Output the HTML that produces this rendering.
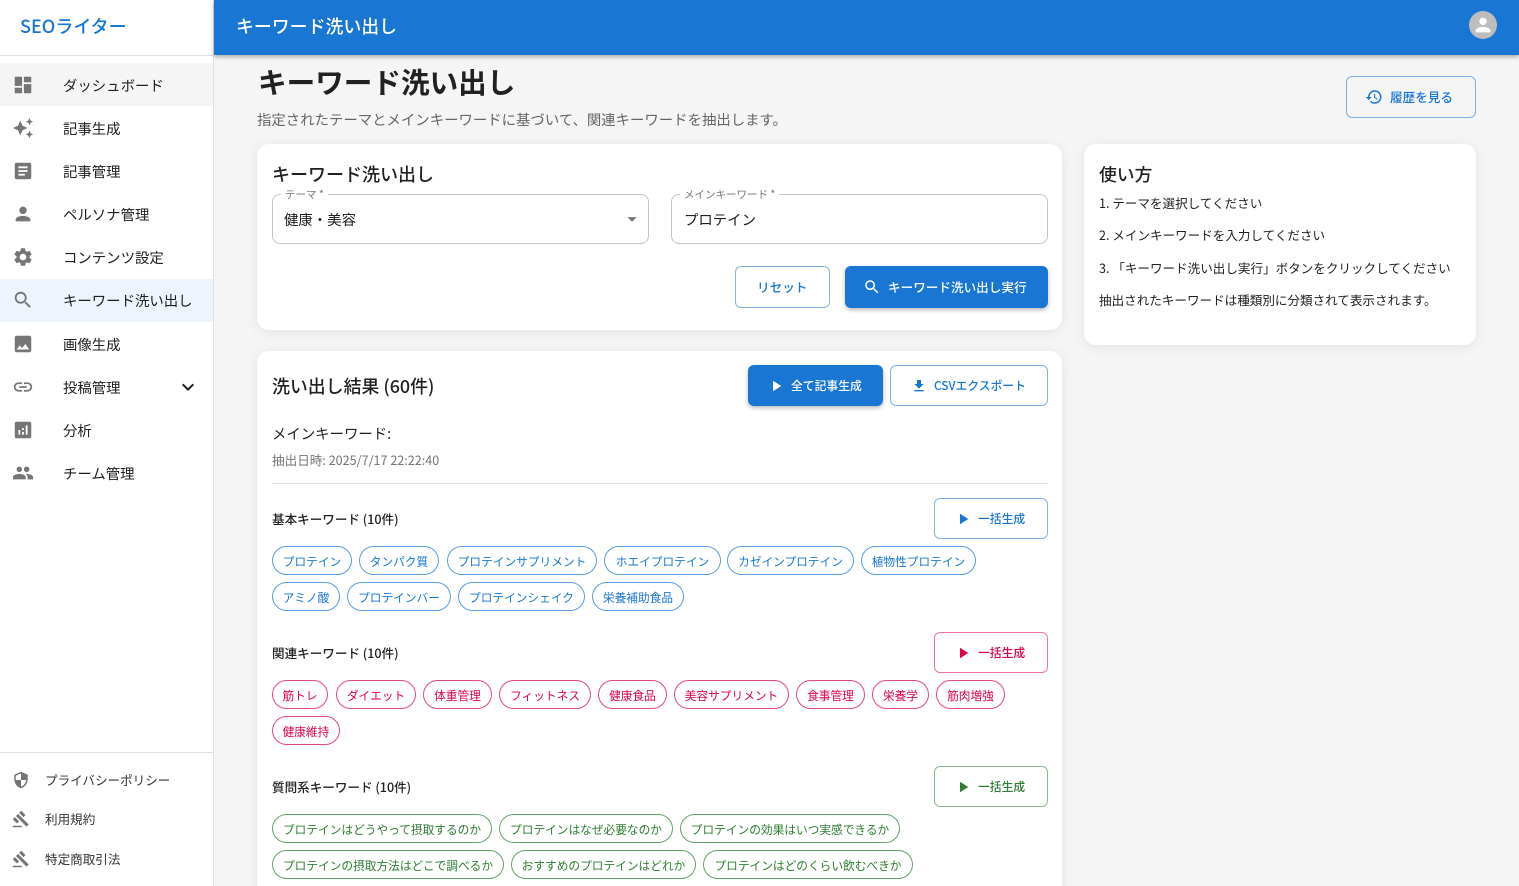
<!DOCTYPE html>
<html lang="ja"><head><meta charset="utf-8"><title>キーワード洗い出し</title>
<style>
*{box-sizing:border-box}
html,body{margin:0;padding:0;width:1519px;height:886px;overflow:hidden;background:#f5f5f5}
body{position:relative;font-family:"Noto Sans CJK JP","Liberation Sans",sans-serif;color:#212121}
.a{position:absolute;white-space:nowrap}
.t{position:absolute;white-space:nowrap;height:30px;line-height:30px}
.card{position:absolute;background:#fff;border-radius:12px;box-shadow:0 2px 12px rgba(0,0,0,.08)}
svg{position:absolute;display:block}
.nav{font-size:14.4px;left:63px;color:#212121}
.foot{font-size:12.57px;left:45px;color:#333}
.ic{fill:#757575}
.btn{position:absolute;border-radius:6px;font-weight:500;white-space:nowrap}
.ob{border:1px solid rgba(25,118,210,.55);background:transparent;color:#1976d2}
.cb{background:#1976d2;color:#fff;box-shadow:0 2px 4px rgba(0,0,0,.28)}
.chip{position:absolute;height:29px;line-height:29px;border-radius:15px;border:1px solid;background:#fff;font-size:11.7px;text-align:center;white-space:nowrap;overflow:hidden}
.b{color:#1976d2;border-color:rgba(25,118,210,.72)}
.p{color:#dc004e;border-color:rgba(220,0,78,.72)}
.g{color:#2e7d32;border-color:rgba(46,125,50,.72)}
.sec{font-size:12.57px;font-weight:500;left:272px;color:#212121}
.lbl{position:absolute;background:#fff;font-size:10.5px;color:#757575;padding:0 4px;height:12px;line-height:12px;white-space:nowrap}
.inp{position:absolute;top:194px;width:377px;height:50px;border:1px solid #c4c4c4;border-radius:8px;background:#fff}
.how{font-size:12.57px;left:1099px;color:#212121}
.s12{font-size:11.8px;font-weight:500}
.s13{font-size:12.6px;font-weight:500}
</style></head><body>
<svg width="0" height="0" style="position:absolute"><defs>
<symbol id="play" viewBox="0 0 24 24"><path d="M8 5v14l11-7z"/></symbol>
<symbol id="gavel" viewBox="0 0 24 24"><path d="M1 21h12v2H1zM5.245 8.07l2.83-2.827 14.14 14.142-2.828 2.828zM12.317 1l5.657 5.656-2.83 2.83-5.654-5.66zM3.825 9.485l5.657 5.657-2.828 2.828-5.657-5.657z"/></symbol>
<symbol id="search" viewBox="0 0 24 24"><path d="M15.5 14h-.79l-.28-.27C15.41 12.59 16 11.11 16 9.5 16 5.91 13.09 3 9.5 3S3 5.91 3 9.5 5.91 16 9.5 16c1.61 0 3.09-.59 4.23-1.57l.27.28v.79l5 4.99L20.49 19l-4.99-5zm-6 0C7.01 14 5 11.99 5 9.5S7.01 5 9.5 5 14 7.01 14 9.5 11.99 14 9.5 14z"/></symbol>
</defs></svg>

<!-- Sidebar -->
<div class="a" style="left:0;top:0;width:214px;height:886px;background:#fff;border-right:1px solid #e0e0e0"></div>
<div class="t" style="left:20px;top:11px;font-size:18px;font-weight:500;color:#1976d2">SEOライター</div>
<div class="a" style="left:0;top:55px;width:213px;height:1px;background:#e0e0e0"></div>
<div class="a" style="left:0;top:63px;width:213px;height:43px;background:#f5f5f5"></div>
<div class="a" style="left:0;top:279px;width:213px;height:43px;background:#edf4fb"></div>

<svg class="ic" style="left:12px;top:74px" width="22" height="22" viewBox="0 0 24 24"><path d="M3 13h8V3H3v10zm0 8h8v-6H3v6zm10 0h8V11h-8v10zm0-18v6h8V3h-8z"/></svg>
<div class="t nav" style="top:71px">ダッシュボード</div>
<svg class="ic" style="left:12px;top:117px" width="22" height="22" viewBox="0 0 24 24"><path d="M19 9l1.25-2.75L23 5l-2.75-1.25L19 1l-1.25 2.75L15 5l2.75 1.25L19 9zm-7.5.5L9 4 6.5 9.5 1 12l5.5 2.5L9 20l2.5-5.5L17 12l-5.5-2.5zM19 15l-1.25 2.75L15 19l2.75 1.25L19 23l1.25-2.75L23 19l-2.75-1.25L19 15z"/></svg>
<div class="t nav" style="top:114px">記事生成</div>
<svg class="ic" style="left:12px;top:160px" width="22" height="22" viewBox="0 0 24 24"><path d="M19 3H5c-1.1 0-2 .9-2 2v14c0 1.1.9 2 2 2h14c1.1 0 2-.9 2-2V5c0-1.1-.9-2-2-2zm-5 14H7v-2h7v2zm3-4H7v-2h10v2zm0-4H7V7h10v2z"/></svg>
<div class="t nav" style="top:157px">記事管理</div>
<svg class="ic" style="left:12px;top:203px" width="22" height="22" viewBox="0 0 24 24"><path d="M12 12c2.21 0 4-1.79 4-4s-1.79-4-4-4-4 1.79-4 4 1.79 4 4 4zm0 2c-2.67 0-8 1.34-8 4v2h16v-2c0-2.66-5.33-4-8-4z"/></svg>
<div class="t nav" style="top:200px">ペルソナ管理</div>
<svg class="ic" style="left:12px;top:246px" width="22" height="22" viewBox="0 0 24 24"><path d="M19.14 12.94c.04-.3.06-.61.06-.94 0-.32-.02-.64-.07-.94l2.03-1.58c.18-.14.23-.41.12-.61l-1.92-3.32c-.12-.22-.37-.29-.59-.22l-2.39.96c-.5-.38-1.03-.7-1.62-.94l-.36-2.54c-.04-.24-.24-.41-.48-.41h-3.84c-.24 0-.43.17-.47.41l-.36 2.54c-.59.24-1.13.57-1.62.94l-2.39-.96c-.22-.08-.47 0-.59.22L2.74 8.87c-.12.21-.08.47.12.61l2.03 1.58c-.05.3-.09.63-.09.94s.02.64.07.94l-2.03 1.58c-.18.14-.23.41-.12.61l1.92 3.32c.12.22.37.29.59.22l2.39-.96c.5.38 1.03.7 1.62.94l.36 2.54c.05.24.24.41.48.41h3.84c.24 0 .44-.17.47-.41l.36-2.54c.59-.24 1.13-.56 1.62-.94l2.39.96c.22.08.47 0 .59-.22l1.92-3.32c.12-.22.07-.47-.12-.61l-2.01-1.58zM12 15.6c-1.98 0-3.6-1.62-3.6-3.6s1.62-3.6 3.6-3.6 3.6 1.62 3.6 3.6-1.62 3.6-3.6 3.6z"/></svg>
<div class="t nav" style="top:243px">コンテンツ設定</div>
<svg class="ic" style="left:12px;top:289px" width="22" height="22"><use href="#search"/></svg>
<div class="t nav" style="top:286px">キーワード洗い出し</div>
<svg class="ic" style="left:12px;top:333px" width="22" height="22" viewBox="0 0 24 24"><path d="M21 19V5c0-1.1-.9-2-2-2H5c-1.1 0-2 .9-2 2v14c0 1.1.9 2 2 2h14c1.1 0 2-.9 2-2zM8.5 13.5l2.5 3.01L14.5 12l4.5 6H5l3.5-4.5z"/></svg>
<div class="t nav" style="top:330px">画像生成</div>
<svg class="ic" style="left:12px;top:376px" width="22" height="22" viewBox="0 0 24 24"><path d="M3.9 12c0-1.71 1.39-3.1 3.1-3.1h4V7H7c-2.76 0-5 2.24-5 5s2.24 5 5 5h4v-1.9H7c-1.71 0-3.1-1.39-3.1-3.1zM8 13h8v-2H8v2zm9-6h-4v1.9h4c1.71 0 3.1 1.39 3.1 3.1s-1.39 3.1-3.1 3.1h-4V17h4c2.76 0 5-2.24 5-5s-2.24-5-5-5z"/></svg>
<div class="t nav" style="top:373px">投稿管理</div>
<svg style="left:176px;top:375px;fill:#212121" width="24" height="24" viewBox="0 0 24 24"><path d="M16.59 8.59L12 13.17 7.41 8.59 6 10l6 6 6-6z"/></svg>
<svg class="ic" style="left:12px;top:419px" width="22" height="22" viewBox="0 0 24 24"><path d="M19 3H5c-1.1 0-2 .9-2 2v14c0 1.1.9 2 2 2h14c1.1 0 2-.9 2-2V5c0-1.1-.9-2-2-2zM9 17H7v-5h2v5zm4 0h-2v-3h2v3zm0-5h-2v-2h2v2zm4 5h-2V7h2v10z"/></svg>
<div class="t nav" style="top:416px">分析</div>
<svg class="ic" style="left:12px;top:462px" width="22" height="22" viewBox="0 0 24 24"><path d="M16 11c1.66 0 2.99-1.34 2.99-3S17.66 5 16 5c-1.66 0-3 1.34-3 3s1.34 3 3 3zm-8 0c1.66 0 2.99-1.34 2.99-3S9.66 5 8 5C6.34 5 5 6.34 5 8s1.34 3 3 3zm0 2c-2.33 0-7 1.17-7 3.5V19h14v-2.5c0-2.33-4.67-3.5-7-3.5zm8 0c-.29 0-.62.02-.97.05 1.16.84 1.97 1.97 1.97 3.45V19h6v-2.5c0-2.33-4.67-3.5-7-3.5z"/></svg>
<div class="t nav" style="top:459px">チーム管理</div>

<div class="a" style="left:0;top:752px;width:213px;height:1px;background:#e0e0e0"></div>
<svg class="ic" style="left:12px;top:771px" width="18" height="18" viewBox="0 0 24 24"><path d="M12 1L3 5v6c0 5.55 3.84 10.74 9 12 5.16-1.26 9-6.45 9-12V5l-9-4zm0 10.99h7c-.53 4.12-3.28 7.79-7 8.94V12H5V6.3l7-3.11v8.8z"/></svg>
<div class="t foot" style="top:765px">プライバシーポリシー</div>
<svg class="ic" style="left:12px;top:810px" width="18" height="18"><use href="#gavel"/></svg>
<div class="t foot" style="top:804px">利用規約</div>
<svg class="ic" style="left:12px;top:850px" width="18" height="18"><use href="#gavel"/></svg>
<div class="t foot" style="top:844px">特定商取引法</div>

<!-- Header -->
<div class="a" style="left:214px;top:0;width:1305px;height:55px;background:#1976d2;box-shadow:0 2px 4px rgba(0,0,0,.3)"></div>
<div class="t" style="left:236px;top:11px;font-size:17.9px;font-weight:500;color:#fff">キーワード洗い出し</div>
<div class="a" style="left:1469px;top:11px;width:28px;height:28px;border-radius:50%;background:#bdbdbd"></div>
<svg style="left:1472px;top:14px;fill:#fff" width="22" height="22" viewBox="0 0 24 24"><path d="M12 12c2.21 0 4-1.79 4-4s-1.79-4-4-4-4 1.79-4 4 1.79 4 4 4zm0 2c-2.67 0-8 1.34-8 4v2h16v-2c0-2.66-5.33-4-8-4z"/></svg>

<!-- Heading -->
<div class="a" style="left:258px;top:61px;height:42px;line-height:42px;font-size:28.6px;font-weight:700;color:#212121">キーワード洗い出し</div>
<div class="t" style="left:257px;top:105px;font-size:14.4px;color:#666">指定されたテーマとメインキーワードに基づいて、関連キーワードを抽出します。</div>
<div class="btn ob" style="left:1346px;top:76px;width:130px;height:42px"></div>
<svg style="left:1365px;top:88px;fill:#1976d2" width="18" height="18" viewBox="0 0 24 24"><path d="M13 3c-4.97 0-9 4.03-9 9H1l3.89 3.89.07.14L9 12H6c0-3.87 3.13-7 7-7s7 3.13 7 7-3.13 7-7 7c-1.93 0-3.68-.79-4.94-2.06l-1.42 1.42C8.27 19.99 10.51 21 13 21c4.97 0 9-4.03 9-9s-4.03-9-9-9zm-1 5v5l4.28 2.54.72-1.21-3.5-2.08V8H12z"/></svg>
<div class="t s13" style="left:1390px;top:82px;color:#1976d2">履歴を見る</div>

<!-- Form card -->
<div class="card" style="left:257px;top:144px;width:805px;height:186px"></div>
<div class="t" style="left:272px;top:159px;font-size:18px;font-weight:500">キーワード洗い出し</div>
<div class="inp" style="left:272px"></div>
<div class="lbl" style="left:281px;top:189px">テーマ *</div>
<div class="t" style="left:284px;top:205px;font-size:14.4px">健康・美容</div>
<svg class="ic" style="left:621px;top:208px" width="22" height="22" viewBox="0 0 24 24"><path d="M7 10l5 5 5-5z"/></svg>
<div class="inp" style="left:671px"></div>
<div class="lbl" style="left:680px;top:189px">メインキーワード *</div>
<div class="t" style="left:684px;top:205px;font-size:14.4px">プロテイン</div>
<div class="btn ob" style="left:735px;top:266px;width:95px;height:42px"></div>
<div class="t s13" style="left:757px;top:272px;color:#1976d2">リセット</div>
<div class="btn cb" style="left:845px;top:266px;width:203px;height:42px"></div>
<svg style="left:863px;top:278px;fill:#fff" width="18" height="18"><use href="#search"/></svg>
<div class="t s13" style="left:888px;top:272px;color:#fff">キーワード洗い出し実行</div>

<!-- Help card -->
<div class="card" style="left:1084px;top:144px;width:392px;height:201px"></div>
<div class="t" style="left:1099px;top:159px;font-size:17.8px;font-weight:500">使い方</div>
<div class="t how" style="top:188px">1. テーマを選択してください</div>
<div class="t how" style="top:220px">2. メインキーワードを入力してください</div>
<div class="t how" style="top:253px">3. 「キーワード洗い出し実行」ボタンをクリックしてください</div>
<div class="t how" style="top:285px">抽出されたキーワードは種類別に分類されて表示されます。</div>

<!-- Result card -->
<div class="card" style="left:257px;top:351px;width:805px;height:600px"></div>
<div class="t" style="left:272px;top:371px;font-size:17.9px;font-weight:500">洗い出し結果 (60件)</div>
<div class="btn cb" style="left:748px;top:365px;width:135px;height:41px"></div>
<svg style="left:767px;top:377px;fill:#fff" width="18" height="18"><use href="#play"/></svg>
<div class="t s12" style="left:791px;top:371px;color:#fff">全て記事生成</div>
<div class="btn ob" style="left:890px;top:365px;width:158px;height:41px"></div>
<svg style="left:911px;top:378px;fill:#1976d2" width="16" height="16" viewBox="0 0 24 24"><path d="M19 9h-4V3H9v6H5l7 7 7-7zM5 18v2h14v-2H5z"/></svg>
<div class="t s12" style="left:934px;top:371px;color:#1976d2">CSVエクスポート</div>
<div class="t" style="left:272px;top:419px;font-size:14.4px">メインキーワード:</div>
<div class="t" style="left:272px;top:445px;font-size:12.6px;color:#757575">抽出日時: 2025/7/17 22:22:40</div>
<div class="a" style="left:272px;top:483px;width:776px;height:1px;background:#e0e0e0"></div>

<div class="t sec" style="top:504px">基本キーワード (10件)</div>
<div class="btn ob" style="left:934px;top:498px;width:114px;height:41px"></div>
<svg style="left:954px;top:510px;fill:#1976d2" width="18" height="18"><use href="#play"/></svg>
<div class="t s12" style="left:978px;top:504px;color:#1976d2">一括生成</div>
<div class="chip b" style="left:272px;top:546px;width:80px">プロテイン</div>
<div class="chip b" style="left:359px;top:546px;width:80px">タンパク質</div>
<div class="chip b" style="left:447px;top:546px;width:150px">プロテインサプリメント</div>
<div class="chip b" style="left:604px;top:546px;width:117px">ホエイプロテイン</div>
<div class="chip b" style="left:727px;top:546px;width:127px">カゼインプロテイン</div>
<div class="chip b" style="left:861px;top:546px;width:115px">植物性プロテイン</div>
<div class="chip b" style="left:272px;top:582px;width:68px">アミノ酸</div>
<div class="chip b" style="left:347px;top:582px;width:104px">プロテインバー</div>
<div class="chip b" style="left:458px;top:582px;width:127px">プロテインシェイク</div>
<div class="chip b" style="left:592px;top:582px;width:92px">栄養補助食品</div>

<div class="t sec" style="top:638px">関連キーワード (10件)</div>
<div class="btn" style="left:934px;top:632px;width:114px;height:41px;border:1px solid rgba(220,0,78,.55)"></div>
<svg style="left:954px;top:644px;fill:#dc004e" width="18" height="18"><use href="#play"/></svg>
<div class="t s12" style="left:978px;top:638px;color:#dc004e">一括生成</div>
<div class="chip p" style="left:272px;top:680px;width:56px">筋トレ</div>
<div class="chip p" style="left:336px;top:680px;width:80px">ダイエット</div>
<div class="chip p" style="left:423px;top:680px;width:69px">体重管理</div>
<div class="chip p" style="left:499px;top:680px;width:92px">フィットネス</div>
<div class="chip p" style="left:598px;top:680px;width:69px">健康食品</div>
<div class="chip p" style="left:674px;top:680px;width:115px">美容サプリメント</div>
<div class="chip p" style="left:796px;top:680px;width:69px">食事管理</div>
<div class="chip p" style="left:872px;top:680px;width:57px">栄養学</div>
<div class="chip p" style="left:936px;top:680px;width:69px">筋肉増強</div>
<div class="chip p" style="left:272px;top:716px;width:68px">健康維持</div>

<div class="t sec" style="top:772px">質問系キーワード (10件)</div>
<div class="btn" style="left:934px;top:766px;width:114px;height:41px;border:1px solid rgba(46,125,50,.55)"></div>
<svg style="left:954px;top:778px;fill:#2e7d32" width="18" height="18"><use href="#play"/></svg>
<div class="t s12" style="left:978px;top:772px;color:#2e7d32">一括生成</div>
<div class="chip g" style="left:272px;top:814px;width:220px">プロテインはどうやって摂取するのか</div>
<div class="chip g" style="left:499px;top:814px;width:174px">プロテインはなぜ必要なのか</div>
<div class="chip g" style="left:680px;top:814px;width:220px">プロテインの効果はいつ実感できるか</div>
<div class="chip g" style="left:272px;top:850px;width:232px">プロテインの摂取方法はどこで調べるか</div>
<div class="chip g" style="left:511px;top:850px;width:185px">おすすめのプロテインはどれか</div>
<div class="chip g" style="left:703px;top:850px;width:210px">プロテインはどのくらい飲むべきか</div>
</body></html>
